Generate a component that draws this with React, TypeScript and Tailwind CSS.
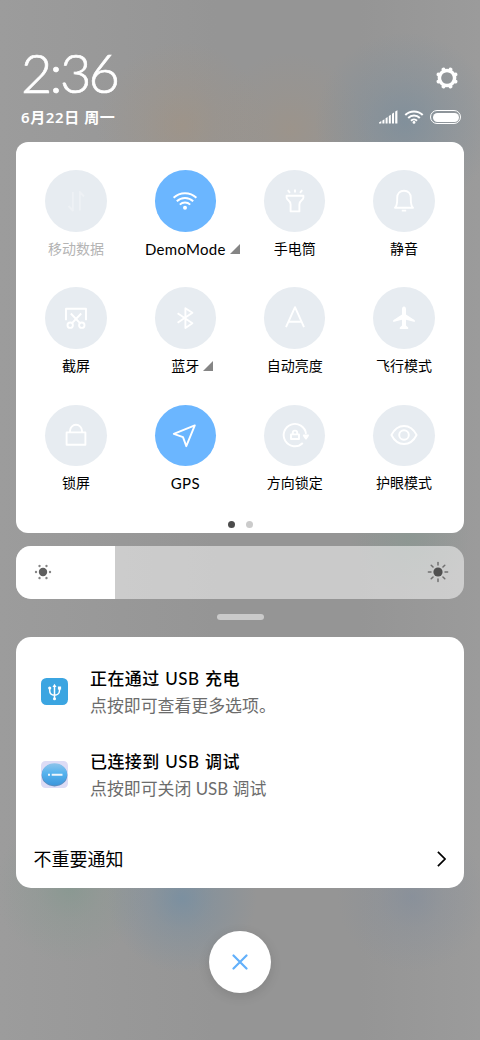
import React from 'react';

type Tile = {
  label: string;
  icon: React.ReactNode;
  active?: boolean;
  disabled?: boolean;
  expandable?: boolean;
};

const tiles: Tile[] = [
  {
    label: '移动数据',
    disabled: true,
    icon: <path d="M-3.2 -9V9.5L-7.5 5M3.8 9.5V-9L8 -4.5" />,
  },
  {
    label: 'DemoMode',
    active: true,
    expandable: true,
    icon: (
      <>
        <path d="M-11.4 -3.2A16.6 16.6 0 0 1 11.4 -3.2M-8.2 .3A11.8 11.8 0 0 1 8.2 .3M-5.2 3.6A7.6 7.6 0 0 1 5.2 3.6" />
        <circle cy="6.7" r="2" fill="currentColor" stroke="none" />
      </>
    ),
  },
  {
    label: '手电筒',
    icon: (
      <path d="M-8.4 -5.3H8.4V-3.5C8.4 -.6 4.4 -.6 4.4 3.4V10.4H-4.4V3.4C-4.4 -.6 -8.4 -.6 -8.4 -3.5ZM0 -11.6V-8.4M-7.2 -10.8L-5 -8.2M7.2 -10.8L5 -8.2" />
    ),
  },
  {
    label: '静音',
    icon: (
      <path d="M-9 6.8C-6.5 4.5 -6.8 2 -6.8 -3.2C-6.8 -7.5 -4 -10.2 0 -10.2S6.8 -7.5 6.8 -3.2C6.8 2 6.5 4.5 9 6.8ZM-2.2 9.6H2.2" />
    ),
  },
  {
    label: '截屏',
    icon: (
      <>
        <path d="M-10 2.2V-9.2H10V2.2M-5.2 -4.5L4 5.2M5.2 -4.5L-4 5.2" />
        <circle cx="-5.8" cy="7.2" r="2.7" />
        <circle cx="5.8" cy="7.2" r="2.7" />
      </>
    ),
  },
  {
    label: '蓝牙',
    expandable: true,
    icon: <path d="M-7.4 -4.8L7.4 5.2L.4 10V-9.8L7.4 -5.2L-7.4 4.8" />,
  },
  {
    label: '自动亮度',
    icon: <path d="M-9 9.2L0 -10.8L9 9.2M-6.6 3.8H6.6" />,
  },
  {
    label: '飞行模式',
    icon: (
      <path
        d="M0 -11.5C1.6 -11.5 2 -9.8 2 -8.4V-3.4L10.8 2.2V4L2 1.8V7.6L4.2 9.4V11H-4.2V9.4L-2 7.6V1.8L-10.8 4V2.2L-2 -3.4V-8.4C-2 -9.8 -1.6 -11.5 0 -11.5Z"
        fill="currentColor"
        stroke="none"
      />
    ),
  },
  {
    label: '锁屏',
    icon: <path d="M-9.4 -2.6H9.4V9.8H-9.4ZM-6 -2.6V-4.2A6 6 0 0 1 6 -4.2V-2.6" />,
  },
  {
    label: 'GPS',
    active: true,
    icon: <path d="M9.8 -9.6L-11.2 -1.2L-2 2.2L1.3 11.2Z" />,
  },
  {
    label: '方向锁定',
    icon: (
      <>
        <path d="M7.8 8A11.2 11.2 0 1 1 11 -1.2M-4 -.6H4V4H-4ZM-2.2 -.6V-2.2A2.2 2.2 0 0 1 2.2 -2.2V-.6" />
        <path d="M8.8 .4L11 3.6L13 .4Z" fill="currentColor" />
      </>
    ),
  },
  {
    label: '护眼模式',
    icon: (
      <>
        <path d="M-12.6 0C-6.5 -12 6.5 -12 12.6 0C6.5 12 -6.5 12 -12.6 0Z" />
        <circle r="4.8" />
      </>
    ),
  },
];

const toothAngles = [22.5, 67.5, 112.5, 157.5, 202.5, 247.5, 292.5, 337.5];

const GearIcon = () => (
  <svg className="h-6 w-6" viewBox="-12 -12 24 24" fill="none" stroke="currentColor">
    <circle r="7.6" strokeWidth="3.5" />
    {toothAngles.map((angle) => (
      <path key={angle} d="M0 -8.2V-9.2" strokeWidth="4" strokeLinecap="round" transform={`rotate(${angle})`} />
    ))}
  </svg>
);

const SignalIcon = () => (
  <svg className="h-[14px] w-[19px]" viewBox="0 0 19 14" fill="currentColor">
    <path d="M0 13.5V12.4L2.3 11V13.5ZM3.4 13.5V10.4L5.4 9.2V13.5ZM6.6 13.5V8.3L8.6 7V13.5ZM9.8 13.5V6L11.8 4.7V13.5ZM13 13.5V3.8L15 2.5V13.5ZM16.2 13.5V1.5L18.4 .3V13.5Z" />
  </svg>
);

const WifiIcon = () => (
  <svg className="h-[14px] w-5" viewBox="0 0 20 14" fill="none" stroke="currentColor" strokeWidth="2">
    <path d="M1.3 5A12.4 12.4 0 0 1 18.7 5M4.2 8A8.2 8.2 0 0 1 15.8 8M7 10.7A4.3 4.3 0 0 1 13 10.7" />
    <circle cx="10" cy="12.4" r="1.4" fill="currentColor" stroke="none" />
  </svg>
);

const QuickTile = ({ label, icon, active, disabled, expandable }: Tile) => (
  <div className="flex h-[117.3px] flex-col items-center">
    <div
      className={`flex h-[61.5px] w-[61.5px] items-center justify-center rounded-full text-white ${
        active ? 'bg-[#6bb6ff]' : 'bg-[#e7ecf1]'
      }`}
    >
      <svg
        className={`h-8 w-8 ${disabled ? 'opacity-30' : ''}`}
        viewBox="-16 -16 32 32"
        fill="none"
        stroke="currentColor"
        strokeWidth="1.9"
        strokeLinejoin="round"
      >
        {icon}
      </svg>
    </div>
    <div
      className={`relative mt-[7px] text-[14px] leading-5 whitespace-nowrap ${
        disabled ? 'text-[#b4b4b4]' : 'text-black'
      }`}
    >
      <span className={active ? 'text-[15px] tracking-[0.3px]' : ''}>{label}</span>
      {expandable && (
        <svg className="absolute top-[5.5px] left-full ml-[4px] h-[10px] w-[10px]" viewBox="0 0 10 10" fill="#858585">
          <path d="M10 0V10H0Z" />
        </svg>
      )}
    </div>
  </div>
);

const UsbIcon = () => (
  <svg className="h-[27px] w-[27px]" viewBox="0 0 27 27" fill="none" stroke="#fff" strokeWidth="1.5">
    <rect width="27" height="27" rx="5.5" fill="#3ba5e1" stroke="none" />
    <path d="M13.5 8V21.5M8.7 11V12.5C8.7 15.6 11 17.2 13.5 17.2S18.5 15.6 18.5 12.5V11" />
    <path d="M11.5 9L13.5 5.8L15.5 9Z" fill="#fff" stroke="none" />
    <circle cx="8.7" cy="10" r="1.6" fill="#fff" stroke="none" />
    <path d="M16.9 8.5H20.1V11.6H16.9Z" fill="#fff" stroke="none" />
    <circle cx="13.5" cy="20.7" r="1.5" fill="#fff" stroke="none" />
  </svg>
);

const DebugIcon = () => (
  <svg className="h-[27px] w-[27px]" viewBox="0 0 27 27">
    <defs>
      <linearGradient id="ball" x1="0" y1="0" x2="0" y2="1">
        <stop offset="0" stopColor="#8ec4ea" />
        <stop offset="0.45" stopColor="#56b3ee" />
        <stop offset="1" stopColor="#3d97dc" />
      </linearGradient>
    </defs>
    <rect width="27" height="27" rx="4.5" fill="#dddcf5" />
    <ellipse cx="13.5" cy="14.2" rx="12.8" ry="11.2" fill="#5b8fc0" />
    <ellipse cx="13.5" cy="13.2" rx="12.6" ry="11" fill="url(#ball)" />
    <path d="M7 13.7H9M10.7 13.7H21.5" stroke="#eef5fc" strokeWidth="1.9" />
  </svg>
);

const Notification = ({ icon, title, text }: { icon: React.ReactNode; title: string; text: string }) => (
  <div className="flex h-[83px] items-start pl-[25px]">
    <div className="mt-[12.5px] w-[49px]">{icon}</div>
    <div>
      <p className="text-[17px] leading-[27px] font-medium tracking-[0.4px] text-black [word-spacing:1px]">{title}</p>
      <p className="text-[16.9px] leading-[27px] text-[#6c6c6c]">{text}</p>
    </div>
  </div>
);

const rayAngles = [0, 45, 90, 135, 180, 225, 270, 315];
const dotAngles = [30, 90, 150, 210, 270, 330];

const App = () => (
  <div className="flex h-[1040px] w-[480px] flex-col overflow-hidden bg-[#979797] bg-[radial-gradient(circle_at_405px_122px,rgba(118,140,157,0.65)_0,rgba(118,140,157,0.3)_42px,transparent_90px),radial-gradient(circle_at_182px_126px,rgba(165,146,125,0.5)_0,rgba(165,146,125,0.22)_40px,transparent_85px),radial-gradient(circle_at_290px_130px,rgba(165,146,125,0.42)_0,rgba(165,146,125,0.18)_36px,transparent_78px),radial-gradient(circle_at_182px_898px,rgba(112,141,164,0.7)_0,rgba(112,141,164,0.32)_32px,transparent_75px),radial-gradient(circle_at_70px_888px,rgba(128,152,141,0.6)_0,rgba(128,152,141,0.25)_32px,transparent_75px),radial-gradient(circle_at_412px_897px,rgba(128,140,156,0.6)_0,rgba(128,140,156,0.25)_32px,transparent_75px),radial-gradient(circle_at_410px_535px,rgba(134,151,144,0.6)_0,transparent_60px),linear-gradient(90deg,#9c9c9c_0,#959595_45%,#959595_75%,#9b9b9b_100%)] px-4 font-['Lato','Noto_Sans_CJK_SC',sans-serif]">
    <header className="flex h-[142px] justify-between pt-[46px] pr-[3px] pl-[5px] text-white">
      <div>
        <div className="mt-[-2px] h-[58px] text-[54px] leading-[58px] font-light tracking-[-2.7px] [-webkit-text-stroke:0.7px_white]">
          2:36
        </div>
        <div className="mt-[4px] font-['Noto_Sans','Noto_Sans_CJK_SC',sans-serif] text-[15px] leading-[22px] font-semibold tracking-[0.6px]">
          6月22日 周一
        </div>
      </div>
      <div className="flex flex-col items-end pt-5">
        <div className="pr-[2.5px]">
          <GearIcon />
        </div>
        <div className="mt-5 flex items-center">
          <SignalIcon />
          <div className="ml-[6px]">
            <WifiIcon />
          </div>
          <div className="ml-[6px] h-[14px] w-[31px] rounded-full border-[1.5px] border-white p-[1.5px]">
            <div className="h-full rounded-full bg-white" />
          </div>
        </div>
      </div>
    </header>

    <section className="h-[391px] shrink-0 rounded-xl bg-white px-[5.3px] pt-7">
      <div className="grid grid-cols-4">
        {tiles.map((tile) => (
          <QuickTile key={tile.label} {...tile} />
        ))}
      </div>
      <div className="mt-[-1px] flex justify-center gap-[11px]">
        <span className="h-[7px] w-[7px] rounded-full bg-[#4c4c4c]" />
        <span className="h-[7px] w-[7px] rounded-full bg-[#cbcbcb]" />
      </div>
    </section>

    <div className="mt-[12.5px] flex h-[53.5px] shrink-0 overflow-hidden rounded-[15px] bg-white/50">
      <div className="flex w-[98.5px] items-center bg-white pl-[16.5px]">
        <svg className="h-5 w-5" viewBox="-10 -10 20 20" fill="#606060">
          <circle r="4.2" />
          {dotAngles.map((angle) => (
            <circle key={angle} cy="-7" r="1.2" fill="#858585" transform={`rotate(${angle})`} />
          ))}
        </svg>
      </div>
      <div className="flex flex-1 items-center justify-end pr-[15.5px]">
        <svg className="h-[22px] w-[22px]" viewBox="-11 -11 22 22" fill="#505050" stroke="#707070">
          <circle r="4.6" stroke="none" />
          {rayAngles.map((angle) => (
            <path key={angle} d="M0 -7V-9.6" strokeWidth="1.5" strokeLinecap="round" transform={`rotate(${angle})`} />
          ))}
        </svg>
      </div>
    </div>

    <div className="mx-auto mt-[15px] h-[6px] w-[47px] shrink-0 rounded-full bg-[#cacaca]" />

    <section className="mt-[17px] h-[250.5px] shrink-0 rounded-[15px] bg-white pt-[28px]">
      <Notification icon={<UsbIcon />} title="正在通过 USB 充电" text="点按即可查看更多选项。" />
      <Notification icon={<DebugIcon />} title="已连接到 USB 调试" text="点按即可关闭 USB 调试" />
      <div className="mt-[13.5px] flex h-7 items-center justify-between pr-[18.5px] pl-[17.5px] text-[18px] leading-7 text-black">
        <span>不重要通知</span>
        <svg className="h-4 w-[9px]" viewBox="0 0 9 16" fill="none" stroke="currentColor" strokeWidth="1.7">
          <path d="M.9 .9L8 8L.9 15.1" />
        </svg>
      </div>
    </section>

    <button className="mx-auto mt-[43.5px] flex h-[62px] w-[62px] shrink-0 items-center justify-center rounded-full bg-white shadow-[0_3px_12px_rgba(0,0,0,0.12)]">
      <svg className="h-4 w-4" viewBox="0 0 16 16" fill="none" stroke="#62b0fb" strokeWidth="2.2" strokeLinecap="round">
        <path d="M1.5 1.5L14.5 14.5M14.5 1.5L1.5 14.5" />
      </svg>
    </button>
  </div>
);

export default App;
